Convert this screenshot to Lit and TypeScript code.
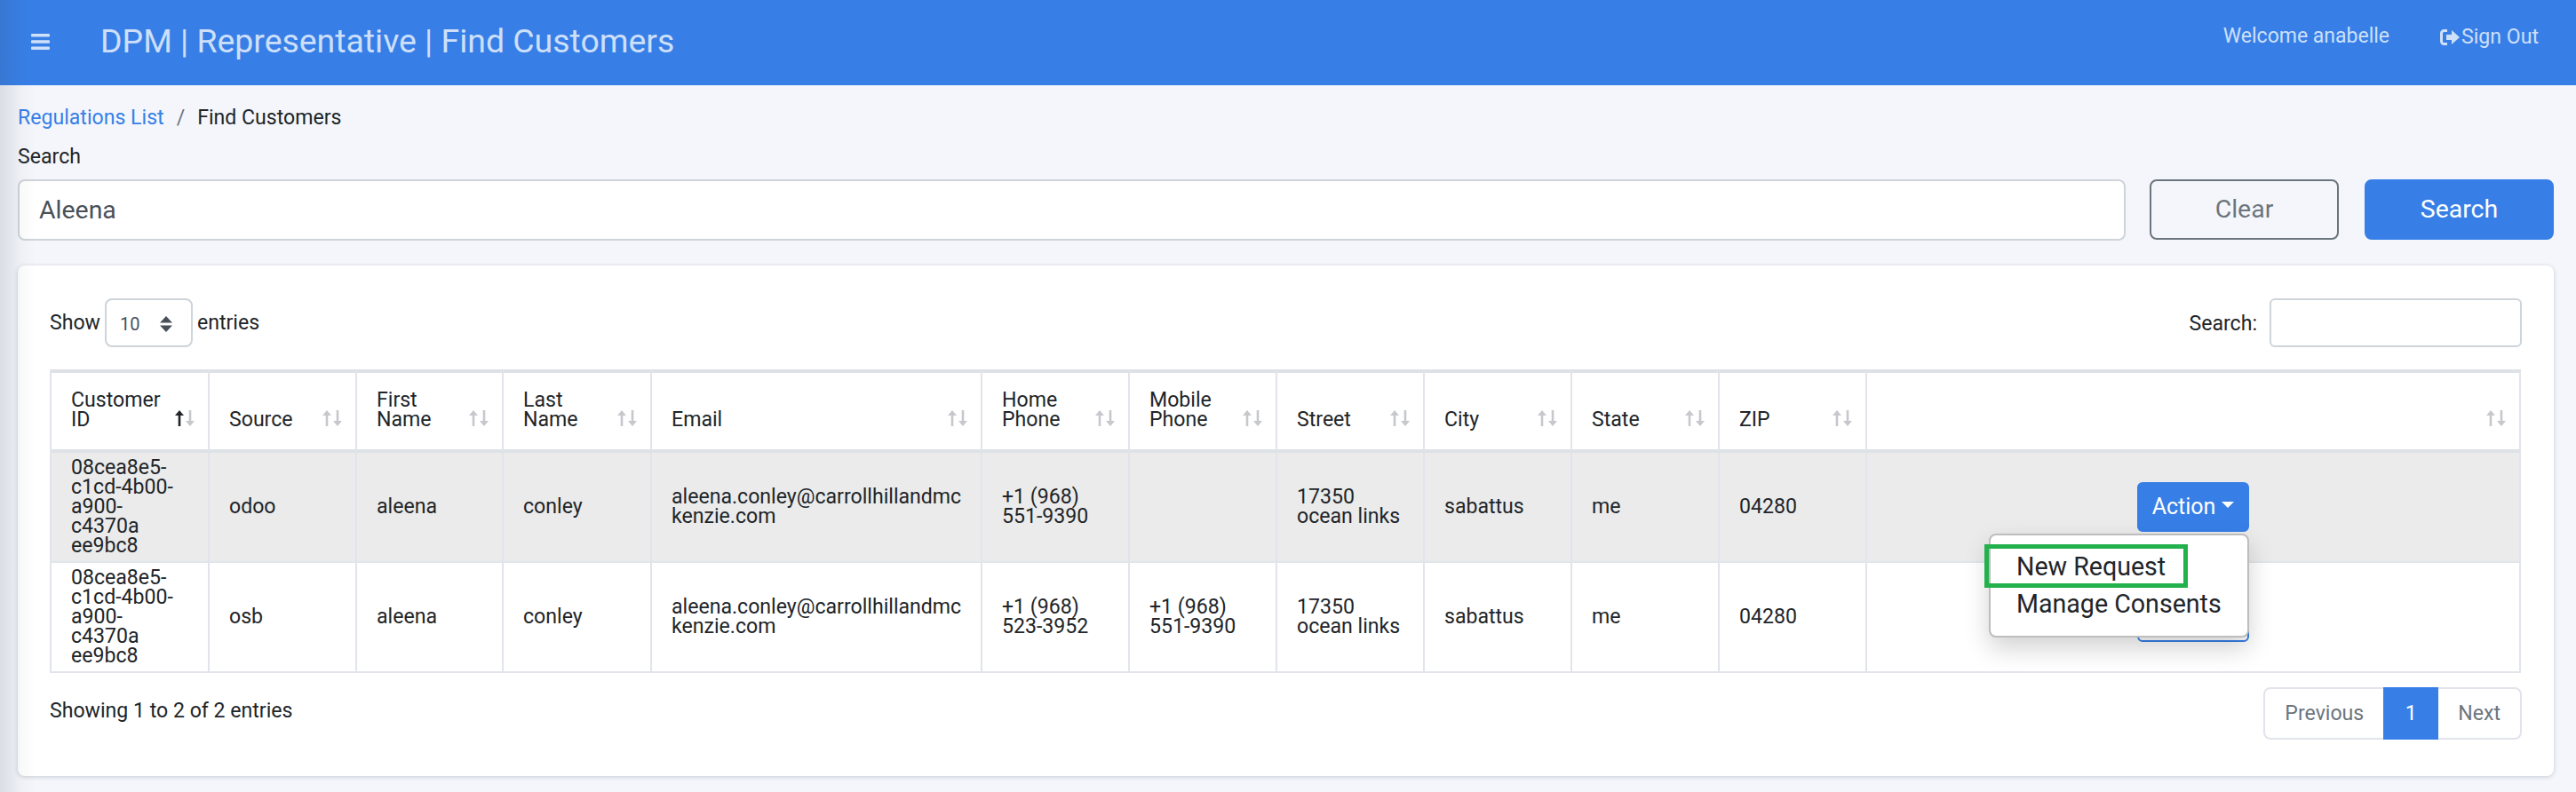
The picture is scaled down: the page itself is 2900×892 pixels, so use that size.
import { LitElement, html, css, svg } from 'lit';
import { customElement } from 'lit/decorators.js';

const columns = [
  { label: 'Customer\nID', width: 178 },
  { label: 'Source', width: 166 },
  { label: 'First\nName', width: 165 },
  { label: 'Last\nName', width: 167 },
  { label: 'Email', width: 372 },
  { label: 'Home\nPhone', width: 166 },
  { label: 'Mobile\nPhone', width: 166 },
  { label: 'Street', width: 166 },
  { label: 'City', width: 166 },
  { label: 'State', width: 166 },
  { label: 'ZIP', width: 166 },
  { label: '', width: 736 },
];

const customerId = '08cea8e5-\nc1cd-4b00-\na900-\nc4370a\nee9bc8';
const email = 'aleena.conley@carrollhillandmc\nkenzie.com';
const street = '17350\nocean links';

const rows = [
  [customerId, 'odoo', 'aleena', 'conley', email, '+1 (968)\n551-9390', '', street, 'sabattus', 'me', '04280'],
  [customerId, 'osb', 'aleena', 'conley', email, '+1 (968)\n523-3952', '+1 (968)\n551-9390', street, 'sabattus', 'me', '04280'],
];

const sortIcon = (active: boolean) => html`<svg class="sort" width="22" height="18" viewBox="0 0 22 18">
    ${svg`<path class=${active ? 'on' : ''} d="M3.700 18V6H0l5-6 5 6H6.300v12z"/>
    <path d="M15.700 0v12H12l5 6 5-6h-3.700V0z"/>`}
  </svg>`;

@customElement('app-root')
export class AppRoot extends LitElement {
  static styles = css`
    :host {
      display: block;
      position: relative;
      min-height: 892px;
      background: #f4f6fb;
      color: #212529;
      font-family: Roboto, "Liberation Sans", sans-serif;
      font-size: 23.1px;
      line-height: 22px;
    }

    /* shadow of the collapsed sidebar, lies over the page */
    .edge {
      position: absolute;
      left: 0;
      top: 0;
      bottom: 0;
      width: 40px;
      background: linear-gradient(to right, rgba(60, 70, 90, 0.14), rgba(60, 70, 90, 0.03) 60%, rgba(60, 70, 90, 0));
      pointer-events: none;
      z-index: 5;
    }

    .topbar {
      display: flex;
      align-items: flex-start;
      height: 96px;
      box-sizing: border-box;
      background: #377fe7;
      color: rgba(255, 255, 255, 0.76);
    }
    .burger {
      margin: 38px 0 0 35px;
      fill: currentColor;
    }
    .title {
      margin: 24px 0 0 57px;
      font-size: 37.4px;
      line-height: 44px;
      flex: 1;
    }
    .welcome {
      margin-top: 29px;
      font-size: 23px;
      line-height: 24px;
    }
    .signout {
      display: flex;
      align-items: center;
      margin: 31px 42px 0 57px;
      line-height: 22px;
    }
    .signout svg {
      fill: currentColor;
      margin-right: 1px;
    }

    main {
      padding: 26px 25px 18px 20px;
    }

    .crumbs {
      display: flex;
      gap: 14px;
    }
    .crumbs a {
      color: #377fe7;
    }
    .crumbs i {
      font-style: normal;
      color: #6c757d;
    }

    .label {
      margin: 22px 0 14px;
    }

    .search-row {
      display: flex;
      align-items: flex-start;
      margin-bottom: 28px;
    }
    .search-input {
      flex: 1;
      height: 69px;
      box-sizing: border-box;
      padding: 0 22px;
      border: 2px solid #ced4da;
      border-radius: 8px;
      background: #fff;
      color: #495057;
      font: inherit;
      font-size: 28.44px;
      outline: none;
    }
    .btn {
      width: 213px;
      height: 68px;
      box-sizing: border-box;
      margin-left: 27px;
      border: 2px solid #6c757d;
      border-radius: 8px;
      background: transparent;
      color: #6c757d;
      font: inherit;
      font-size: 28.44px;
    }
    .btn.primary {
      margin-left: 29px;
      border-color: #377fe7;
      background: #377fe7;
      color: #fff;
    }

    .card {
      height: 575px;
      box-sizing: border-box;
      padding: 37px 36px 0;
      border-radius: 8px;
      background: #fff;
      box-shadow: 0 1px 5px rgba(40, 50, 70, 0.22);
    }

    .tools {
      display: flex;
      justify-content: space-between;
      height: 55px;
      margin-bottom: 25px;
    }
    .show,
    .filter {
      display: flex;
      align-items: center;
    }
    .select {
      display: flex;
      align-items: center;
      justify-content: space-between;
      width: 99px;
      height: 55px;
      box-sizing: border-box;
      margin: 0 5px;
      padding: 2px 21px 0 15px;
      border: 2px solid #ced4da;
      border-radius: 8px;
      color: #495057;
      font-size: 20px;
    }
    .select svg {
      fill: #495057;
    }
    .filter span {
      margin: 3px 14px 0 0;
    }
    .filter input {
      width: 284px;
      height: 55px;
      box-sizing: border-box;
      border: 2px solid #ced4da;
      border-radius: 6px;
      background: #fff;
      outline: none;
    }

    table {
      width: 2782px;
      table-layout: fixed;
      border-collapse: separate;
      border-spacing: 0;
      border-left: 2px solid #e1e4ea;
    }
    th {
      position: relative;
      padding: 20px 24px 22px 22px;
      border-top: 4px solid #dee2e6;
      border-bottom: 4px solid #dee2e6;
      border-right: 2px solid #e1e4ea;
      font-weight: 400;
      text-align: left;
      vertical-align: bottom;
      white-space: pre-line;
    }
    td {
      height: 110px;
      padding: 6px 24px 6px 22px;
      border-bottom: 2px solid #e1e4ea;
      border-right: 2px solid #e1e4ea;
      white-space: pre-line;
    }
    tbody tr:first-child td {
      background: #ebebeb;
    }
    .sort {
      position: absolute;
      right: 15px;
      bottom: 26px;
      fill: #c6c8cc;
    }
    .sort .on {
      fill: #212529;
    }

    td.actions {
      padding: 0;
      white-space: normal;
    }
    .dropdown {
      position: relative;
      width: 126px;
      margin: 0 auto;
    }
    .action {
      display: flex;
      align-items: center;
      justify-content: center;
      gap: 7px;
      width: 100%;
      height: 56px;
      box-sizing: border-box;
      padding: 0;
      border: 2px solid #377fe7;
      border-radius: 6px;
      background: #377fe7;
      color: #fff;
      font: inherit;
      font-size: 25px;
    }
    .action.outline {
      background: #fff;
      color: #377fe7;
    }
    .action::after {
      content: "";
      margin-top: -5px;
      border-top: 7px solid currentColor;
      border-left: 7.5px solid transparent;
      border-right: 7.5px solid transparent;
    }

    .menu {
      position: absolute;
      top: 58px;
      right: 0;
      width: 293px;
      height: 117px;
      box-sizing: border-box;
      padding: 14px 0 18px;
      border: 2px solid #bdbdbd;
      border-radius: 8px;
      background: #fff;
      box-shadow: 0 12px 28px rgba(0, 0, 0, 0.18);
      z-index: 3;
    }
    .menu div {
      position: relative;
      height: 42px;
      padding-left: 29px;
      font-size: 28.6px;
      line-height: 42px;
      white-space: nowrap;
    }
    /* green annotation drawn over the first item */
    .menu .marked::before {
      content: "";
      position: absolute;
      left: -7px;
      top: -4px;
      width: 229px;
      height: 49px;
      box-sizing: border-box;
      border: 5px solid #22b14c;
    }

    .foot {
      display: flex;
      justify-content: space-between;
      align-items: flex-start;
      margin-top: 16px;
    }
    .info {
      margin-top: 16px;
    }
    .pager {
      display: flex;
      height: 59px;
      box-sizing: border-box;
      border: 2px solid #e1e4ea;
      border-radius: 8px;
      color: #6c757d;
      line-height: 55px;
    }
    .pager span {
      padding: 0 22px;
    }
    .pager .current {
      width: 62px;
      box-sizing: border-box;
      margin: -2px 0;
      padding: 2px 0;
      background: #377fe7;
      color: #fff;
      text-align: center;
    }
  `;

  renderRow(row: string[], index: number) {
    return html`
      <tr>
        ${row.map((cell) => html`<td>${cell}</td>`)}
        <td class="actions">
          <div class="dropdown">
            <button class="action ${index === 1 ? 'outline' : ''}">Action</button>
            ${index === 0
              ? html`<div class="menu">
                  <div class="marked">New Request</div>
                  <div>Manage Consents</div>
                </div>`
              : ''}
          </div>
        </td>
      </tr>
    `;
  }

  render() {
    return html`
      <div class="edge"></div>
      <header class="topbar">
        <svg class="burger" width="21" height="18" viewBox="0 0 21 18">
          <rect y="0" width="21" height="3.400" rx="1" />
          <rect y="7.300" width="21" height="3.400" rx="1" />
          <rect y="14.600" width="21" height="3.400" rx="1" />
        </svg>
        <div class="title">DPM | Representative | Find Customers</div>
        <div class="welcome">Welcome anabelle</div>
        <div class="signout">
          <svg width="23" height="18" viewBox="0 0 23 18">
            <path d="M8 3H4.500A1.500 1.500 0 0 0 3 4.500v9A1.500 1.500 0 0 0 4.500 15H8v3H4.500A4.500 4.500 0 0 1 0 13.500v-9A4.500 4.500 0 0 1 4.500 0H8z" />
            <path d="M7 6h6V1l9 8-9 8v-5H7z" />
          </svg>
          Sign Out
        </div>
      </header>

      <main>
        <nav class="crumbs"><a>Regulations List</a><i>/</i><span>Find Customers</span></nav>
        <div class="label">Search</div>
        <div class="search-row">
          <input class="search-input" value="Aleena" />
          <button class="btn">Clear</button>
          <button class="btn primary">Search</button>
        </div>

        <section class="card">
          <div class="tools">
            <div class="show">
              Show
              <div class="select">
                10
                <svg width="14" height="18" viewBox="0 0 14 18"><path d="M7 0l7 7.500H0zM7 18l7-7.500H0z" /></svg>
              </div>
              entries
            </div>
            <div class="filter"><span>Search:</span><input /></div>
          </div>

          <table>
            <colgroup>
              ${columns.map((c) => html`<col style="width:${c.width}px" />`)}
            </colgroup>
            <thead>
              <tr>
                ${columns.map((c, i) => html`<th>${c.label}${sortIcon(i === 0)}</th>`)}
              </tr>
            </thead>
            <tbody>
              ${rows.map((row, i) => this.renderRow(row, i))}
            </tbody>
          </table>

          <div class="foot">
            <div class="info">Showing 1 to 2 of 2 entries</div>
            <div class="pager">
              <span>Previous</span>
              <span class="current">1</span>
              <span>Next</span>
            </div>
          </div>
        </section>
      </main>
    `;
  }
}
